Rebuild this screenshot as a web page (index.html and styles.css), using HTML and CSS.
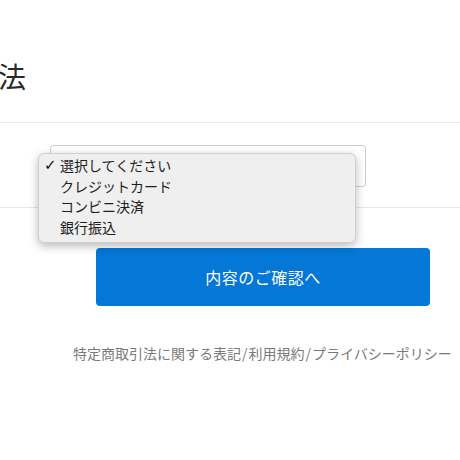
FILE: index.html
```html
<!DOCTYPE html>
<html lang="ja">
<head>
<meta charset="utf-8">
<title>お支払い方法</title>
<link rel="stylesheet" href="styles.css">
</head>
<body>
<div class="page">
  <header class="page-head">
    <h1 class="title">お支払い方法</h1>
  </header>
  <section class="form-row">
    <select class="select-box" aria-label="お支払い方法">
      <option>選択してください</option>
      <option>クレジットカード</option>
      <option>コンビニ決済</option>
      <option>銀行振込</option>
    </select>
    <ul class="menu">
      <li class="menu-item is-checked"><span class="check">✓</span>選択してください</li>
      <li class="menu-item">クレジットカード</li>
      <li class="menu-item">コンビニ決済</li>
      <li class="menu-item">銀行振込</li>
    </ul>
  </section>
  <section class="actions">
    <button class="primary-btn" type="button">内容のご確認へ</button>
  </section>
  <footer class="footer-links">
    <a class="link" href="#">特定商取引法に関する表記</a><span class="sep">/</span><a class="link" href="#">利用規約</a><span class="sep">/</span><a class="link" href="#">プライバシーポリシー</a>
  </footer>
</div>
</body>
</html>
```

FILE: styles.css
```css
html, body {
  margin: 0;
  padding: 0;
  background: #ffffff;
}

body {
  font-family: "Noto Sans CJK JP", "Noto Sans", sans-serif;
  color: #222222;
  overflow: hidden;
}

.page {
  width: 460px;
}

.page-head {
  padding: 56px 0 26px;
  border-bottom: 1px solid #e8e8e8;
}

.title {
  margin: 0 0 0 -142px;
  font-size: 28px;
  line-height: 40px;
  font-weight: 400;
  color: #2a2a2a;
  white-space: nowrap;
}

.form-row {
  position: relative;
  padding: 22px 0 20px 50px;
  border-bottom: 1px solid #e8e8e8;
}

.select-box {
  display: block;
  width: 316px;
  height: 42px;
  margin: 0;
  border: 1px solid #cdcdcd;
  border-radius: 4px;
  background: #ffffff;
  -webkit-appearance: none;
  appearance: none;
  font-family: inherit;
  font-size: 14px;
  color: #222222;
  padding: 0 12px;
}

.menu {
  position: absolute;
  left: 38px;
  top: 30px;
  width: 318px;
  margin: 0;
  padding: 1px 0 5px;
  list-style: none;
  background: #efefef;
  border: 1px solid #cfcfcf;
  border-radius: 6px;
  box-shadow: 0 3px 10px rgba(0, 0, 0, 0.28);
  box-sizing: border-box;
  height: 90px;
}

.menu-item {
  position: relative;
  padding-left: 21px;
  font-size: 14px;
  line-height: 20.7px;
  color: #1e1e1e;
  white-space: nowrap;
}

.check {
  position: absolute;
  left: 5px;
  top: 0;
  font-family: "DejaVu Sans", sans-serif;
  font-size: 15px;
  font-weight: 700;
  color: #111111;
}

.actions {
  padding: 40px 0 0 96px;
}

.primary-btn {
  display: block;
  width: 334px;
  height: 58px;
  margin: 0;
  border: none;
  border-radius: 4px;
  background: #0477d7;
  color: #ffffff;
  font-family: inherit;
  font-size: 16px;
  letter-spacing: 0.5px;
}

.footer-links {
  margin-top: 37px;
  padding-left: 73px;
  font-size: 14px;
  line-height: 20px;
  color: #7a7a7a;
  white-space: nowrap;
}

.link {
  color: #7a7a7a;
  text-decoration: none;
}

.sep {
  margin: 0 1px;
}
```
